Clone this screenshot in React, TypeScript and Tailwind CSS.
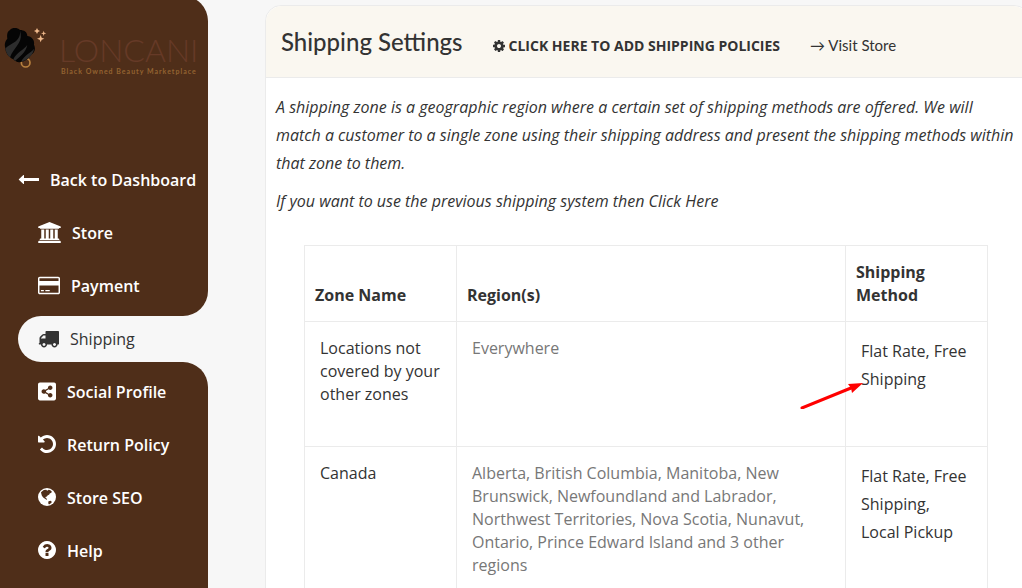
import type { ReactNode } from 'react';
import { FaShareAltSquare } from 'react-icons/fa';

type Row = {
    zone: string;
    regions: string;
    methods: string;
};

const rows: Row[] = [
    {
        zone: 'Locations not covered by your other zones',
        regions: 'Everywhere',
        methods: 'Flat Rate, Free Shipping',
    },
    {
        zone: 'Canada',
        regions:
            'Alberta, British Columbia, Manitoba, New Brunswick, Newfoundland and Labrador, Northwest Territories, Nova Scotia, Nunavut, Ontario, Prince Edward Island and 3 other regions',
        methods: 'Flat Rate, Free Shipping, Local Pickup',
    },
];

const ArrowLeftIcon = () => (
    <svg className="h-[21px] w-[21px]" viewBox="0 0 1792 1792" fill="currentColor" aria-hidden="true">
        <path d="M1792 800v192q0 14-9 23t-23 9h-1248v224q0 21-19 29t-35-5l-384-350q-10-10-10-23 0-14 10-24l384-354q16-14 35-6 19 9 19 29v224h1248q14 0 23 9t9 23z" />
    </svg>
);

const BankIcon = () => (
    <svg className="h-[21px] w-[23px]" viewBox="0 0 1920 1792" fill="currentColor" aria-hidden="true">
        <path d="M960 0l960 384v128h-128q0 26-20.5 45t-48.5 19h-1526q-28 0-48.5-19t-20.5-45h-128v-128zm-704 640h256v768h128v-768h256v768h128v-768h256v768h128v-768h256v768h59q28 0 48.5 19t20.5 45v64h-1664v-64q0-26 20.5-45t48.5-19h59v-768zm1595 960q28 0 48.5 19t20.5 45v128h-1920v-128q0-26 20.5-45t48.5-19h1782z" />
    </svg>
);

const CardIcon = () => (
    <svg className="h-[21px] w-[22px]" viewBox="0 0 1920 1792" fill="currentColor" aria-hidden="true">
        <path d="M1760 128q66 0 113 47t47 113v1216q0 66-47 113t-113 47h-1600q-66 0-113-47t-47-113v-1216q0-66 47-113t113-47h1600zm-1600 128q-13 0-22.5 9.5t-9.5 22.5v224h1664v-224q0-13-9.5-22.5t-22.5-9.5h-1600zm1600 1280q13 0 22.5-9.5t9.5-22.5v-608h-1664v608q0 13 9.5 22.5t22.5 9.5h1600zm-1504-128v-128h256v128h-256zm384 0v-128h384v128h-384z" />
    </svg>
);

const TruckIcon = () => (
    <svg className="h-[21px] w-[21px]" viewBox="0 0 1792 1792" fill="currentColor" aria-hidden="true">
        <path d="M640 1408q0-52-38-90t-90-38-90 38-38 90 38 90 90 38 90-38 38-90zm-384-512h384v-256h-158q-13 0-22 9l-195 195q-9 9-9 22v30zm1280 512q0-52-38-90t-90-38-90 38-38 90 38 90 90 38 90-38 38-90zm256-1088v1024q0 15-4 26.5t-13.5 18.5-16.5 11.5-23.5 6-22.5 2-25.5 0-22.5-.5q0 106-75 181t-181 75-181-75-75-181h-384q0 106-75 181t-181 75-181-75-75-181h-64q-3 0-22.5.5t-25.5 0-22.5-2-23.5-6-16.5-11.5-13.5-18.5-4-26.5q0-26 19-45t45-19v-320q0-8-.5-35t0-38 2.5-34.5 6.5-37 14-30.5 22.5-30l198-198q19-19 50.5-32t58.5-13h160v-192q0-26 19-45t45-19h1024q26 0 45 19t19 45z" />
    </svg>
);

const UndoIcon = () => (
    <svg className="h-[18px] w-[18px]" viewBox="128 128 1536 1536" fill="currentColor" aria-hidden="true">
        <path d="M1664 896q0 156-61 298t-164 245-245 164-298 61q-172 0-327-72.5t-264-204.5q-7-10-6.5-22.5t8.5-20.5l137-138q10-9 25-9 16 2 23 12 73 95 179 147t225 52q104 0 198.5-40.5t163.5-109.5 109.5-163.5 40.5-198.5-40.5-198.5-109.5-163.5-163.5-109.5-198.5-40.5q-98 0-188 35.5t-160 101.5l137 138q31 30 14 69-17 40-59 40h-448q-26 0-45-19t-19-45v-448q0-42 40-59 39-17 69 14l130 129q107-101 244.5-156.5t284.5-55.5q156 0 298 61t245 164 164 245 61 298z" />
    </svg>
);

const GlobeIcon = () => (
    <svg className="h-[18px] w-[18px]" viewBox="0 0 18 18" aria-hidden="true">
        <circle cx="9" cy="9" r="9" fill="currentColor" />
        <path
            fill="#4f2e19"
            d="M3 4.2 5.8 2l2.4-.2 1 .9 1.5-.9 1.6.5 1.5 1.2-.6 1.6-1.3.2-.6 1.3-1.8.8-.6 1-1.5.6.3 1.1 1.2.7-.1 1.1-1.8-1.1-1.8-1.4-1.3-1.6-.6-2.1zM10.5 13.2l2.2-.4 1.2 1.1-1 1.4-1.9 1.2-.8-1.3z"
        />
    </svg>
);

const HelpIcon = () => (
    <svg className="h-[18px] w-[18px]" viewBox="128 128 1536 1536" fill="currentColor" aria-hidden="true">
        <path d="M1024 1376v-192q0-14-9-23t-23-9h-192q-14 0-23 9t-9 23v192q0 14 9 23t23 9h192q14 0 23-9t9-23zm256-672q0-88-55.5-163t-138.5-116-170-41q-243 0-371 213-15 24 8 42l132 100q7 6 19 6 16 0 25-12 53-68 86-92 34-24 86-24 48 0 85.5 26t37.5 59q0 38-20 61t-68 45q-63 28-115.5 86.5t-52.5 125.5v36q0 14 9 23t23 9h192q14 0 23-9t9-23q0-19 21.5-49.5t54.5-49.5q32-18 49-28.5t46-35 44.5-48 28-60.5 12.5-81zm384 192q0 209-103 385.5t-279.5 279.5-385.5 103-385.5-103-279.5-279.5-103-385.5 103-385.5 279.5-279.5 385.5-103 385.5 103 279.5 279.5 103 385.5z" />
    </svg>
);

const CogIcon = () => (
    <svg className="h-3 w-3" viewBox="128 128 1536 1536" fill="currentColor" aria-hidden="true">
        <path d="M1152 896q0-106-75-181t-181-75-181 75-75 181 75 181 181 75 181-75 75-181zm512-109v222q0 12-8 23t-20 13l-185 28q-19 54-39 91 35 50 107 138 10 12 10 25t-9 23q-27 37-99 108t-94 71q-12 0-26-9l-138-108q-44 23-91 38-16 136-29 186-7 28-36 28h-222q-14 0-24.5-8.5t-11.5-21.5l-28-184q-49-16-90-37l-141 107q-10 9-25 9-14 0-25-11-126-114-165-168-7-10-7-23 0-12 8-23 15-21 51-66.5t54-70.5q-27-50-41-99l-183-27q-13-2-21-12.5t-8-23.5v-222q0-12 8-23t19-13l186-28q14-46 39-92-40-57-107-138-10-12-10-24 0-10 9-23 26-36 98.5-107.5t94.5-71.5q13 0 26 10l138 107q44-23 91-38 16-136 29-186 7-28 36-28h222q14 0 24.5 8.5t11.5 21.5l28 184q49 16 90 37l142-107q9-9 24-9 13 0 25 10 129 119 165 170 7 8 7 22 0 12-8 23-15 21-51 66.5t-54 70.5q26 50 41 98l183 28q13 2 21 12.5t8 23.5z" />
    </svg>
);

const LogoMark = () => (
    <svg className="h-11 w-11 shrink-0" viewBox="0 0 132 132" aria-hidden="true">
        <circle cx="65" cy="104" r="13" fill="none" stroke="#b8813f" strokeWidth="5" />
        {/* head wrap */}
        <path
            d="M18 6C24-2 40-2 48 6c12 0 22 6 22 18 14 2 22 12 20 26 6 12 2 24-8 30-8 12-20 20-32 22-10 2-16-2-22-8C14 88 4 74 4 60 0 50 4 38 10 32 8 20 10 10 18 6z"
            fill="#050505"
        />
        <path d="M48 8c2 18-8 30-22 38C16 52 8 56 4 62c2 12 8 22 14 26 6-16 16-26 26-42 8-12 8-26 4-38z" fill="#2d2d2d" />
        <path d="M70 50c-8 14-34 24-42 44l6 4c12-12 32-24 36-48zM90 62c-8 12-28 18-38 38l8-2c16-8 28-20 30-36z" fill="#2d2d2d" />
        {/* sparkles */}
        <path
            d="M99 0l3 6 6 3-6 3-3 6-3-6-6-3 6-3zM119 8l2 6 6 2-6 2-2 6-2-6-6-2 6-2zM110 21l3 8 8 3-8 3-3 8-3-8-8-3 8-3z"
            fill="#efb98b"
        />
    </svg>
);

type NavItemProps = {
    icon: ReactNode;
    label: string;
};

const NavItem = ({ icon, label }: NavItemProps) => (
    <a href="#" className="flex h-[46px] items-center gap-[11px] pl-[38px] font-semibold text-white [&>svg]:mb-0.5">
        {icon}
        {label}
    </a>
);

const Sidebar = () => (
    <aside className="flex w-52 shrink-0 flex-col">
        <div className="-mt-1 rounded-r-[25px] bg-[#4f2e19] pt-1 pb-[7px]">
            <a href="#" className="flex h-[157px] pt-7 pl-1">
                <LogoMark />
                <span className="flex flex-col pt-2 pl-[11px]">
                    <span className="font-[Lato] text-[32px] leading-[28px] font-light text-[#663a27]">LONCANI</span>
                    <span className="pl-0.5 font-[Lato] text-[7px] leading-[14px] font-bold tracking-[1px] whitespace-nowrap text-[#936331]">
                        Black Owned Beauty Marketplace
                    </span>
                </span>
            </a>
            <nav className="flex flex-col gap-[7px]">
                <a
                    href="#"
                    className="flex h-[46px] items-center gap-[11px] pl-[18px] font-semibold whitespace-nowrap text-white [&>svg]:mb-0.5"
                >
                    <ArrowLeftIcon />
                    Back to Dashboard
                </a>
                <NavItem icon={<BankIcon />} label="Store" />
                <NavItem icon={<CardIcon />} label="Payment" />
            </nav>
        </div>
        <div className="bg-[#4f2e19] pl-[18px]">
            <a
                href="#"
                aria-current="page"
                className="flex h-[46px] items-center gap-[11px] rounded-l-full bg-[#f7f7f7] pl-5 font-medium text-[#333] [&>svg]:mb-0.5"
            >
                <TruckIcon />
                Shipping
            </a>
        </div>
        <nav className="flex grow flex-col gap-[7px] rounded-tr-[25px] bg-[#4f2e19] pt-[7px]">
            <NavItem icon={<FaShareAltSquare className="h-[21px] w-[18px]" />} label="Social Profile" />
            <NavItem icon={<UndoIcon />} label="Return Policy" />
            <NavItem icon={<GlobeIcon />} label="Store SEO" />
            <NavItem icon={<HelpIcon />} label="Help" />
        </nav>
    </aside>
);

const App = () => {
    return (
        <div className="flex min-h-screen overflow-x-clip bg-[#f7f7f7] font-['Open_Sans',sans-serif] text-base text-[#333]">
            <Sidebar />
            <main className="-mr-2 flex min-w-0 grow flex-col pt-[5px] pl-[57px]">
                <div className="grow rounded-t-2xl border border-[#ebebeb] bg-white">
                    <header className="flex h-[72px] items-center rounded-t-2xl border-b border-[#ebebeb] bg-[#faf7f0] pl-[15px] whitespace-nowrap">
                        <h1 className="font-['Lato',sans-serif] text-2xl leading-7 font-medium">Shipping Settings</h1>
                        <a href="#" className="ml-[30px] flex items-center gap-1 pt-2 text-sm font-bold">
                            <CogIcon />
                            CLICK HERE TO ADD SHIPPING POLICIES
                        </a>
                        <a href="#" className="ml-[30px] pt-2 font-['Lato',sans-serif] text-[15px]">
                            → Visit Store
                        </a>
                    </header>
                    <div className="px-2.5 pt-[15px]">
                        <p className="mb-2.5 leading-7 italic">
                            A shipping zone is a geographic region where a certain set of shipping methods are offered. We will match a customer to a single
                            zone using their shipping address and present the shipping methods within that zone to them.
                        </p>
                        <p className="leading-7 italic">
                            If you want to use the previous shipping system then <a href="#">Click Here</a>
                        </p>
                    </div>
                    <div className="relative mt-[30px] mr-[41px] ml-[38px]">
                        <table className="w-full table-fixed border-collapse text-left">
                            <colgroup>
                                <col className="w-[152px]" />
                                <col />
                                <col className="w-[142px]" />
                            </colgroup>
                            <thead>
                                <tr className="h-[76px] align-bottom leading-[23px]">
                                    <th className="border border-[#ebebeb] px-2.5 pb-[14px] font-bold">Zone Name</th>
                                    <th className="border border-[#ebebeb] px-2.5 pb-[14px] font-bold">Region(s)</th>
                                    <th className="border border-[#ebebeb] px-2.5 pb-[14px] font-bold">Shipping Method</th>
                                </tr>
                            </thead>
                            <tbody>
                                {rows.map((row) => (
                                    <tr key={row.zone} className="h-[125px] align-top">
                                        <td className="border border-[#ebebeb] px-[15px] pt-[15px] pb-5 leading-[23px]">
                                            <a href="#">{row.zone}</a>
                                        </td>
                                        <td className="border border-[#ebebeb] px-[15px] pt-[15px] pb-5 leading-[23px] text-[#777]">{row.regions}</td>
                                        <td className="border border-[#ebebeb] px-[15px] pt-[15px] pb-5 leading-7">{row.methods}</td>
                                    </tr>
                                ))}
                            </tbody>
                        </table>
                        {/* pointer to the shipping methods link */}
                        <svg className="absolute top-[136px] right-[124px] h-7 w-16" viewBox="0 0 64 28" aria-hidden="true">
                            <path d="M2 27 51 7" stroke="#f00" strokeWidth="3" strokeLinecap="round" />
                            <path d="M63 2 48 3 51 7 52 12z" fill="#f00" />
                        </svg>
                    </div>
                </div>
            </main>
        </div>
    );
};

export default App;
